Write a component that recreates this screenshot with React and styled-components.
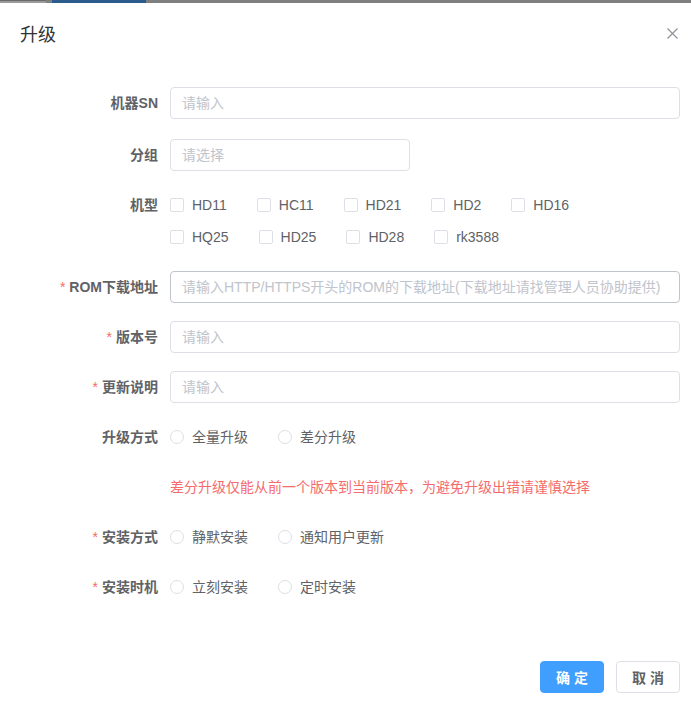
import React from 'react';
import styled, { createGlobalStyle } from 'styled-components';

const GlobalStyle = createGlobalStyle`
  html, body {
    margin: 0;
    padding: 0;
    overflow: hidden;
    background: #fff;
  }
  body {
    font-family: "Liberation Sans", "Noto Sans CJK SC", sans-serif;
    font-size: 14px;
  }
`;

const models = ['HD11', 'HC11', 'HD21', 'HD2', 'HD16', 'HQ25', 'HD25', 'HD28', 'rk3588'];

const CloseIcon = () => (
  <svg width="11" height="11" viewBox="0 0 11 11">
    <path d="M0.5 0.5 L10.5 10.5 M10.5 0.5 L0.5 10.5" stroke="#909399" strokeWidth="1.2" fill="none" />
  </svg>
);

const App = () => {
  return (
    <Page>
      <GlobalStyle />
      <BackStrip>
        <StripTab />
        <StripGap />
        <StripActive />
      </BackStrip>
      <Dialog>
        <Header>
          <Title>升级</Title>
          <CloseButton>
            <CloseIcon />
          </CloseButton>
        </Header>
        <Body>
          <FormItem $gap={20}>
            <Label>机器SN</Label>
            <Control>
              <Input placeholder="请输入" />
            </Control>
          </FormItem>
          <FormItem>
            <Label>分组</Label>
            <Control>
              <Input placeholder="请选择" $width={240} readOnly />
            </Control>
          </FormItem>
          <FormItem>
            <Label>机型</Label>
            <Control>
              <CheckGroup>
                {models.map((m) => (
                  <Check key={m}>
                    <Box />
                    <OptionText>{m}</OptionText>
                  </Check>
                ))}
              </CheckGroup>
            </Control>
          </FormItem>
          <FormItem>
            <Label $required>ROM下载地址</Label>
            <Control>
              <Input $hover placeholder="请输入HTTP/HTTPS开头的ROM的下载地址(下载地址请找管理人员协助提供)" />
            </Control>
          </FormItem>
          <FormItem>
            <Label $required>版本号</Label>
            <Control>
              <Input placeholder="请输入" />
            </Control>
          </FormItem>
          <FormItem>
            <Label $required>更新说明</Label>
            <Control>
              <Input placeholder="请输入" />
            </Control>
          </FormItem>
          <FormItem>
            <Label>升级方式</Label>
            <Control>
              <RadioGroup>
                <Radio><Circle /><OptionText>全量升级</OptionText></Radio>
                <Radio><Circle /><OptionText>差分升级</OptionText></Radio>
              </RadioGroup>
            </Control>
          </FormItem>
          <FormItem>
            <Label />
            <Control>
              <Note>差分升级仅能从前一个版本到当前版本，为避免升级出错请谨慎选择</Note>
            </Control>
          </FormItem>
          <FormItem>
            <Label $required>安装方式</Label>
            <Control>
              <RadioGroup>
                <Radio><Circle /><OptionText>静默安装</OptionText></Radio>
                <Radio><Circle /><OptionText>通知用户更新</OptionText></Radio>
              </RadioGroup>
            </Control>
          </FormItem>
          <FormItem>
            <Label $required>安装时机</Label>
            <Control>
              <RadioGroup>
                <Radio><Circle /><OptionText>立刻安装</OptionText></Radio>
                <Radio><Circle /><OptionText>定时安装</OptionText></Radio>
              </RadioGroup>
            </Control>
          </FormItem>
        </Body>
        <Footer>
          <Button $primary>确 定</Button>
          <Button>取 消</Button>
        </Footer>
      </Dialog>
    </Page>
  );
};

const Page = styled.div`
  width: 691px;
  overflow: hidden;
`;

const BackStrip = styled.div`
  display: flex;
  height: 3px;
  background: #7f7f7f;
`;

const StripTab = styled.div`
  width: 46px;
  background: #9b9b9b;
  border-top: 1px solid #6a6a6a;
  box-sizing: border-box;
`;

const StripGap = styled.div`
  width: 6px;
`;

const StripActive = styled.div`
  width: 94px;
  background: #2b5a8c;
`;

const Dialog = styled.div`
  width: 700px;
  background: #fff;
`;

const Header = styled.div`
  position: relative;
  padding: 20px 20px 10px;
`;

const Title = styled.span`
  display: block;
  font-size: 18px;
  line-height: 24px;
  color: #303133;
`;

const CloseButton = styled.button`
  position: absolute;
  top: 25px;
  right: 22px;
  display: flex;
  padding: 0;
  border: none;
  background: transparent;
`;

const Body = styled.div`
  padding: 30px 20px;
`;

const FormItem = styled.div`
  display: flex;
  margin-bottom: ${(p) => p.$gap || 18}px;
`;

const Label = styled.label`
  flex: 0 0 150px;
  box-sizing: border-box;
  padding-right: 12px;
  text-align: right;
  font-weight: bold;
  line-height: 32px;
  color: #606266;

  &::before {
    content: ${(p) => (p.$required ? "'*'" : 'none')};
    color: #f56c6c;
    font-weight: normal;
    margin-right: 4px;
  }
`;

const Control = styled.div`
  flex: 1;
  min-width: 0;
  line-height: 32px;
`;

const Input = styled.input`
  display: block;
  box-sizing: border-box;
  width: ${(p) => (p.$width ? `${p.$width}px` : '100%')};
  height: 32px;
  padding: 0 11px;
  border: 1px solid ${(p) => (p.$hover ? '#c0c4cc' : '#dcdfe6')};
  border-radius: 4px;
  font-family: inherit;
  font-size: 14px;
  color: #606266;
  outline: none;

  &::placeholder {
    color: #c0c4cc;
  }
`;

const CheckGroup = styled.div`
  display: flex;
  flex-wrap: wrap;
  column-gap: 30px;
  max-width: 440px;
`;

const Check = styled.span`
  display: flex;
  align-items: center;
  height: 32px;
`;

const Box = styled.span`
  width: 14px;
  height: 14px;
  box-sizing: border-box;
  border: 1px solid #dcdfe6;
  border-radius: 2px;
`;

const OptionText = styled.span`
  padding-left: 8px;
  color: #606266;
`;

const RadioGroup = styled.div`
  display: flex;
  column-gap: 30px;
`;

const Radio = styled.span`
  display: flex;
  align-items: center;
  height: 32px;
`;

const Circle = styled.span`
  width: 14px;
  height: 14px;
  box-sizing: border-box;
  border: 1px solid #dcdfe6;
  border-radius: 50%;
`;

const Note = styled.span`
  color: #f56c6c;
`;

const Footer = styled.div`
  display: flex;
  justify-content: flex-end;
  gap: 12px;
  padding: 10px 20px 20px;
`;

const Button = styled.button`
  width: 64px;
  height: 32px;
  padding: 0;
  border: 1px solid ${(p) => (p.$primary ? '#409eff' : '#dcdfe6')};
  border-radius: 4px;
  background: ${(p) => (p.$primary ? '#409eff' : '#fff')};
  color: ${(p) => (p.$primary ? '#fff' : '#606266')};
  font-family: inherit;
  font-size: 14px;
  font-weight: bold;
`;

export default App;
